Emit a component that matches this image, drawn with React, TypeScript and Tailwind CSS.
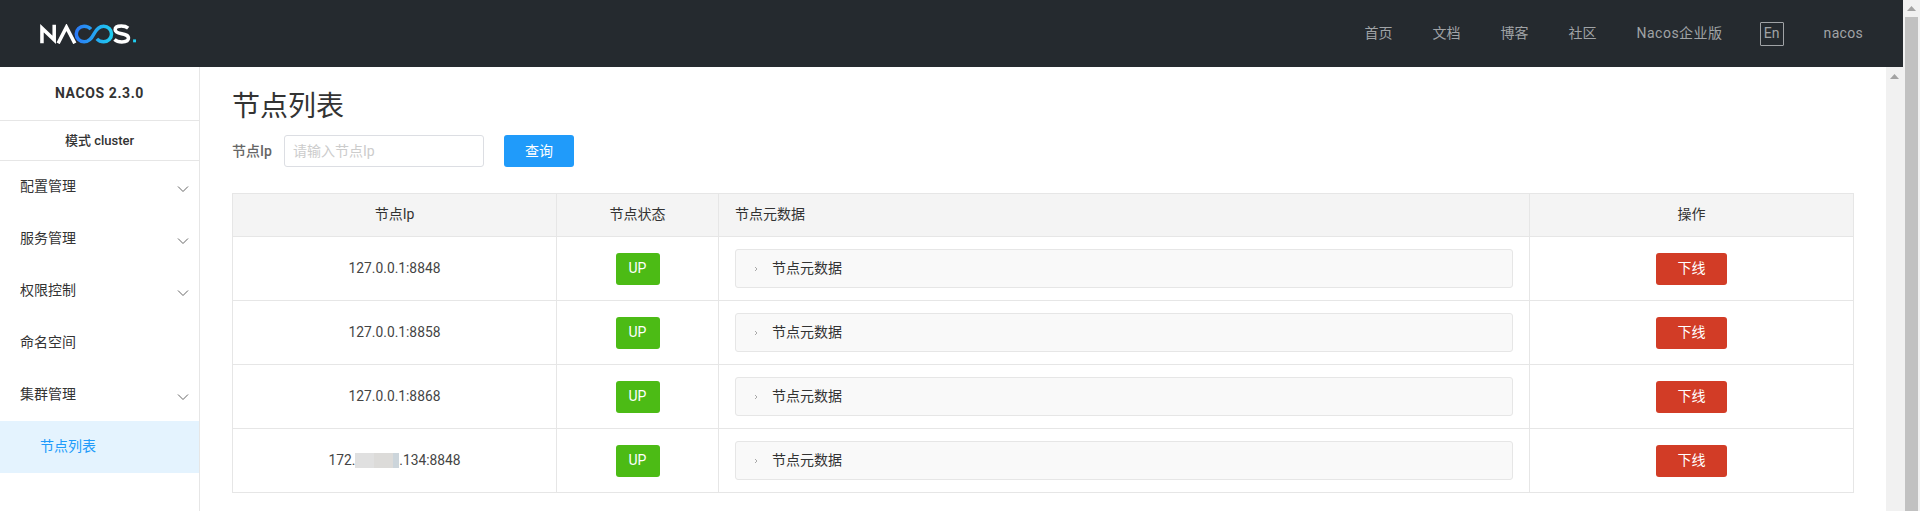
import React from "react";

const FONT = "[font-family:Roboto,'Noto_Sans_CJK_SC',sans-serif]";

function Chevron() {
  return (
    <svg width="12" height="8" viewBox="0 0 12 8" fill="none" className="mt-[5px] shrink-0">
      <path d="M1 1.5 L6 6.5 L11 1.5" stroke="#666" strokeWidth="1" />
    </svg>
  );
}

function Arrow() {
  return (
    <svg width="9" height="5" viewBox="0 0 9 5">
      <path d="M4.5 0 L9 5 H0 Z" fill="#a3a3a3" />
    </svg>
  );
}

function Logo() {
  return (
    <svg width="97" height="20" viewBox="0 0 99 20" fill="none">
      <defs>
        <linearGradient id="inf" x1="36" y1="0" x2="74" y2="0" gradientUnits="userSpaceOnUse">
          <stop offset="0" stopColor="#2b78f5" />
          <stop offset="1" stopColor="#1fcdf0" />
        </linearGradient>
      </defs>
      <path d="M2 19.5 V4 L14.5 16 V0.5" stroke="#fff" strokeWidth="3.6" />
      <path d="M18.5 19.5 L27 3 L35.5 19.5" stroke="#fff" strokeWidth="3.6" />
      <path
        d="M52 5 C50 2.8 47.5 2 45 2 A8 8 0 0 0 45 18 C50 18 52.5 15 55 10 C57.5 5 60 2 65 2 A8 8 0 0 1 65 18 C62.5 18 60 17.2 58 15"
        stroke="url(#inf)"
        strokeWidth="3.6"
      />
      <path
        d="M90 4 C88 2.4 85.5 1.9 83 1.9 C79 1.9 76.7 3 76.7 5.6 C76.7 11 90.3 8.5 90.3 14.2 C90.3 17 87.5 18.1 83.5 18.1 C80.5 18.1 78 17.4 76 15.6"
        stroke="#fff"
        strokeWidth="3.6"
      />
      <rect x="95" y="15.5" width="3" height="3" fill="#1fcdf0" />
    </svg>
  );
}

const menu: { label: string; chevron: boolean }[] = [
  { label: "配置管理", chevron: true },
  { label: "服务管理", chevron: true },
  { label: "权限控制", chevron: true },
  { label: "命名空间", chevron: false },
  { label: "集群管理", chevron: true },
];

const nav = ["首页", "文档", "博客", "社区"];

const rows: React.ReactNode[] = [
  "127.0.0.1:8848",
  "127.0.0.1:8858",
  "127.0.0.1:8868",
  <span className="inline-flex items-center justify-center" key="r">
    172.
    <span className="flex h-[15px] w-[44px]">
      <span className="h-full w-[19px] bg-[#e0e0e0]" />
      <span className="h-full w-[19px] bg-[#dcdbd9]" />
      <span className="h-full w-[6px] bg-[#ccd5db]" />
    </span>
    .134:8848
  </span>,
];

export default function App() {
  return (
    <div className={`flex h-[511px] w-full overflow-hidden bg-white text-[14px] text-[#333] ${FONT}`}>
      <div className="flex min-w-0 flex-1 flex-col">
        <header className="flex h-[67px] shrink-0 items-center justify-between bg-[#252a2f] pl-[40px] pr-[40px]">
          <div className="flex h-[20px]">
            <Logo />
          </div>
          <nav className="flex items-center gap-[40px] text-[#a0a3a6]">
            {nav.map((n) => (
              <span key={n}>{n}</span>
            ))}
            <span className="tracking-[0.5px]">Nacos企业版</span>
            <span className="-ml-[3px] flex h-[24px] w-[24px] items-center justify-center rounded-[1px] border border-[#a0a3a6] text-[14px]">
              En
            </span>
            <span className="tracking-[0.3px]">nacos</span>
          </nav>
        </header>
        <div className="flex min-h-0 flex-1">
          <aside className="flex w-[200px] shrink-0 flex-col border-r border-[#e6e6e6]">
            <div className="flex h-[54px] items-center justify-center border-b border-[#e6e6e6] pb-[1px] text-[14px] font-bold tracking-[0.6px] text-[#333]">
              NACOS 2.3.0
            </div>
            <div className="flex h-[40px] items-center justify-center border-b border-[#e6e6e6] text-[13px] font-medium text-[#333]">
              模式 cluster
            </div>
            {menu.map((m) => (
              <div key={m.label} className="flex h-[52px] items-center justify-between pb-[2px] pl-[20px] pr-[10px]">
                <span>{m.label}</span>
                {m.chevron && <Chevron />}
              </div>
            ))}
            <div className="flex h-[52px] items-center bg-[#e4f3fe] pb-[2px] pl-[40px] text-[#209bfa]">节点列表</div>
          </aside>
          <main className="min-w-0 flex-1 px-[32px]">
            <h1 className="mt-[20px] h-[40px] text-[28px] leading-[40px] font-normal text-[#333]">节点列表</h1>
            <div className="mt-[8px] flex items-center">
              <label className="w-[52px] font-medium text-[#666]">节点Ip</label>
              <input
                placeholder="请输入节点Ip"
                className="h-[32px] w-[200px] rounded-[3px] border border-[#dcdee3] px-[8px] text-[14px] outline-none placeholder:text-[#cccccc]"
              />
              <button className="ml-[20px] h-[32px] w-[70px] rounded-[3px] bg-[#209bfa] text-white">查询</button>
            </div>
            <table className="mt-[26px] w-[1621px] table-fixed border-collapse text-center">
              <colgroup>
                <col className="w-[324px]" />
                <col className="w-[162px]" />
                <col className="w-[811px]" />
                <col className="w-[324px]" />
              </colgroup>
              <thead>
                <tr className="h-[43px] bg-[#f4f4f4]">
                  <th className="border border-[#e6e6e6] pb-[2px] font-normal">节点Ip</th>
                  <th className="border border-[#e6e6e6] pb-[2px] font-normal">节点状态</th>
                  <th className="border border-[#e6e6e6] pb-[2px] pl-[16px] text-left font-normal">节点元数据</th>
                  <th className="border border-[#e6e6e6] pb-[2px] font-normal">操作</th>
                </tr>
              </thead>
              <tbody>
                {rows.map((r, i) => (
                  <tr key={i} className="h-[64px]">
                    <td className="border border-[#e6e6e6] text-[13.8px] text-[#444]">{r}</td>
                    <td className="border border-[#e6e6e6]">
                      <span className="inline-flex h-[32px] w-[44px] items-center justify-center rounded-[3px] bg-[#4cbb15] text-white">
                        UP
                      </span>
                    </td>
                    <td className="border border-[#e6e6e6] px-[16px]">
                      <div className="flex h-[39px] items-center rounded-[3px] border border-[#e6e6e6] bg-[#f9f9f9] pl-[18px] text-left">
                        <svg width="4" height="6" viewBox="0 0 4 6" fill="none" className="shrink-0">
                          <path d="M1 1 L3 3 L1 5" stroke="#aaa" strokeWidth="1" />
                        </svg>
                        <span className="ml-[14px]">节点元数据</span>
                      </div>
                    </td>
                    <td className="border border-[#e6e6e6]">
                      <button className="h-[32px] w-[71px] rounded-[3px] bg-[#d23c26] text-white">下线</button>
                    </td>
                  </tr>
                ))}
              </tbody>
            </table>
          </main>
          <div className="flex w-[17px] shrink-0 justify-center bg-[#f1f1f1] pt-[7px]">
            <Arrow />
          </div>
        </div>
      </div>
      <div className="flex w-[17px] shrink-0 flex-col items-center bg-[#f1f1f1]">
        <div className="flex h-[17px] w-full shrink-0 items-center justify-center">
          <Arrow />
        </div>
        <div className="w-[13px] flex-1 bg-[#c1c1c1]" />
      </div>
    </div>
  );
}
